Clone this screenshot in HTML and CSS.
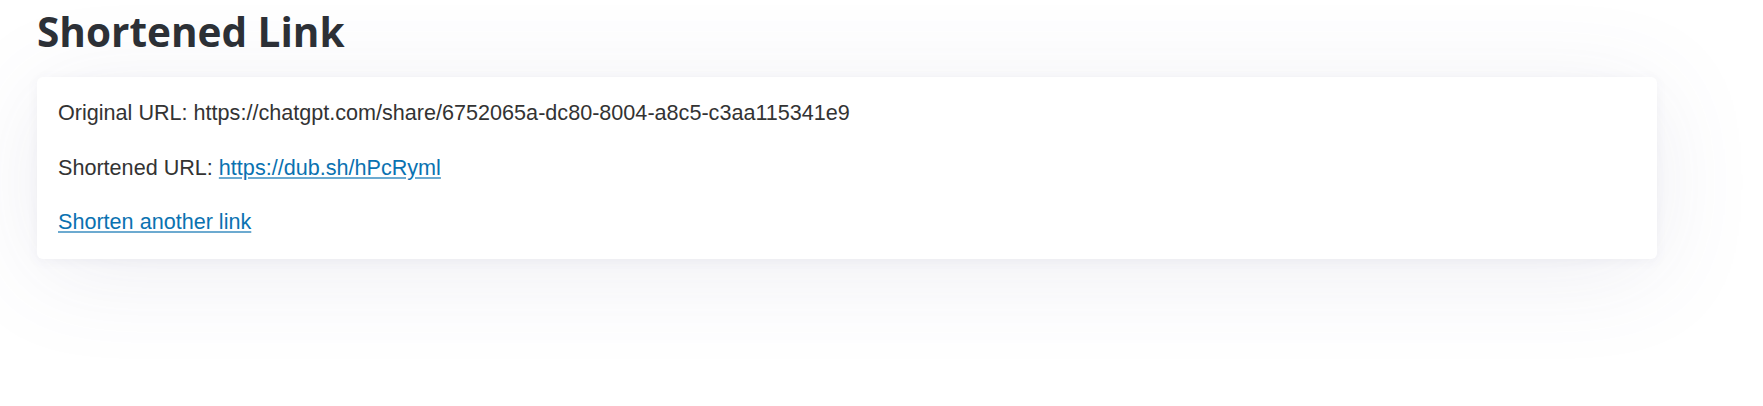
FILE: index.html
```html
<!DOCTYPE html>
<html lang="en">
<head>
<meta charset="utf-8">
<title>Shortened Link</title>
<link rel="stylesheet" href="styles.css">
</head>
<body>
<main class="page">
  <h1 class="title">Shortened Link</h1>
  <section class="card">
    <p class="row">Original URL: https://chatgpt.com/share/6752065a-dc80-8004-a8c5-c3aa115341e9</p>
    <p class="row">Shortened URL: <a class="link" href="https://dub.sh/hPcRyml">https://dub.sh/hPcRyml</a></p>
    <p class="row"><a class="link" href="#">Shorten another link</a></p>
  </section>
</main>
</body>
</html>
```
FILE: styles.css
```css
html, body {
  margin: 0;
  padding: 0;
  background: #ffffff;
}
body {
  min-height: 100vh;
}
.page {
  min-height: 406px;
  box-sizing: border-box;
  padding: 3px 106px 0 37px;
  font-family: "Liberation Sans", Arial, sans-serif;
  color: #333333;
}
.title {
  font-family: "Open Sans", "Noto Sans", sans-serif;
  font-weight: 700;
  font-size: 40.5px;
  line-height: 57px;
  margin: 0 0 17px;
  color: #2c3036;
}
.card {
  background: #ffffff;
  border-radius: 6px;
  padding: 21px 21px 22px;
  box-shadow: 0 14px 100px rgba(90, 90, 140, 0.10), 0 2px 12px rgba(90, 90, 140, 0.06);
}
.row {
  font-size: 21.6px;
  line-height: 30px;
  margin: 0 0 24.5px;
}
.row:last-child {
  margin-bottom: 0;
}
.link {
  color: #0a72b1;
  text-decoration: underline;
  text-decoration-color: rgba(10, 114, 177, 0.6);
}
```
